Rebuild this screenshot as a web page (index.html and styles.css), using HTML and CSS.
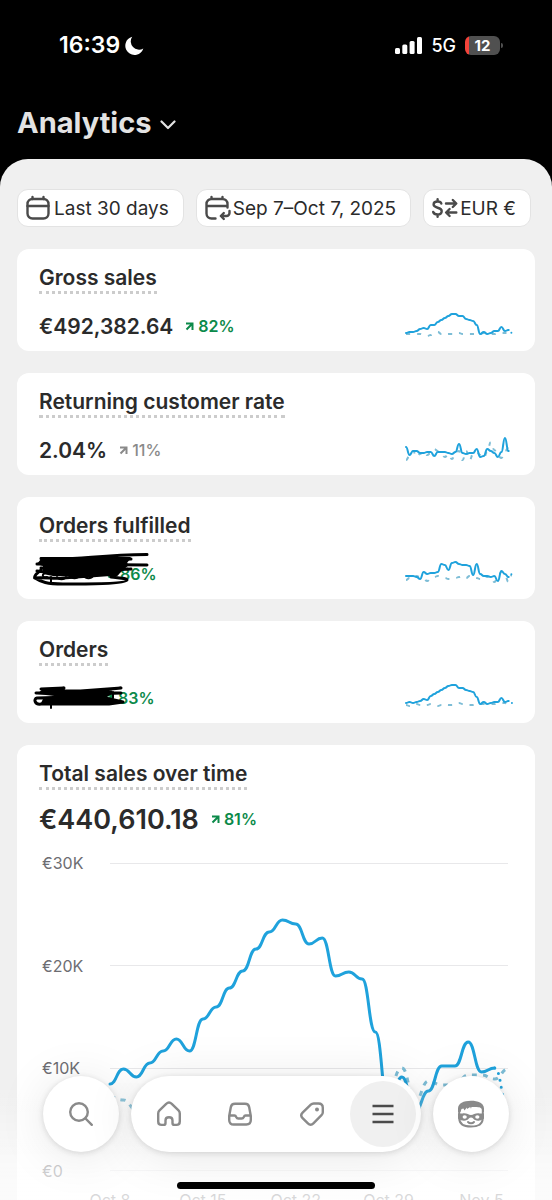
FILE: index.html
```html
<!DOCTYPE html>
<html lang="en">
<head>
    <meta charset="utf-8">
    <meta name="viewport" content="width=device-width, initial-scale=1">
    <title>Analytics</title>
    <link rel="stylesheet" href="styles.css">
</head>
<body>
    <div class="app">
        <div class="status-bar">
            <div class="status-left">
                <span class="time">16:39</span>
                <svg class="moon" viewBox="0 0 19 19"><path d="M7.2 0.8A9.2 9.2 0 1 0 18.3 12.4A8.2 8.2 0 0 1 7.2 0.8Z" fill="#fff"/></svg>
            </div>
            <div class="status-right">
                <svg class="signal" viewBox="0 0 27 17" fill="#fff">
                    <rect x="0" y="11" width="5" height="6" rx="1.5"/>
                    <rect x="7.3" y="7.5" width="5" height="9.5" rx="1.5"/>
                    <rect x="14.6" y="4" width="5" height="13" rx="1.5"/>
                    <rect x="22" y="0" width="5" height="17" rx="1.5"/>
                </svg>
                <span class="network">5G</span>
                <span class="battery">12</span>
            </div>
        </div>

        <header class="header">
            <h1>Analytics</h1>
            <svg class="chevron" viewBox="0 0 16 10"><path d="M1.5 1.5L8 8L14.5 1.5" fill="none" stroke="#e3e3e3" stroke-width="2.2" stroke-linecap="round" stroke-linejoin="round"/></svg>
        </header>

        <main class="sheet">
            <div class="filters">
                <button class="chip" type="button">
                    <svg class="icon" viewBox="0 0 24 24">
                        <rect x="1.5" y="3" width="21" height="19.5" rx="5"/>
                        <path d="M1.5 10H22.5M6.5 1V3M17.5 1V3"/>
                    </svg>
                    Last 30 days
                </button>
                <button class="chip" type="button">
                    <svg class="icon" viewBox="0 0 24 24">
                        <path d="M10.5 22.5H6.5A5 5 0 0 1 1.5 17.5V8A5 5 0 0 1 6.5 3H17.5A5 5 0 0 1 22.5 8V11.5M1.5 10H22.5M6.5 1V3M17.5 1V3"/>
                        <path d="M24.5 15V17A3 3 0 0 1 21.5 20H16M18.8 17L15.8 20L18.8 23"/>
                    </svg>
                    Sep 7–Oct 7, 2025
                </button>
                <button class="chip" type="button">
                    <svg class="icon" viewBox="0 0 24 24">
                        <path d="M9.3 7.5C9 6.2 7.7 5.5 5.6 5.5C3.4 5.5 1.6 6.4 1.6 8.5C1.6 12.7 9.7 10.8 9.7 15C9.7 17.3 7.7 18.5 5.6 18.5C3.2 18.5 1.7 17.5 1.2 16M5.6 3.2V5.5M5.6 18.5V20.8"/>
                        <path d="M14 7.5H24M20.8 4L24.3 7.5L20.8 11M24.3 16.5H14.5M17.6 13L14.1 16.5L17.6 20"/>
                    </svg>
                    EUR €
                </button>
            </div>

            <section class="card">
                <h2>Gross sales</h2>
                <div class="metric">
                    <span class="value">€492,382.64</span>
                    <span class="trend up"><svg class="arrow" viewBox="0 0 9 9"><path d="M1 1.5H7.5V8M7 2L1.5 7.5"/></svg>82%</span>
                    <svg class="spark" id="spark-gross" viewBox="0 0 106 32"></svg>
                </div>
            </section>

            <section class="card">
                <h2>Returning customer rate</h2>
                <div class="metric">
                    <span class="value">2.04%</span>
                    <span class="trend flat"><svg class="arrow" viewBox="0 0 9 9"><path d="M1 1.5H7.5V8M7 2L1.5 7.5"/></svg>11%</span>
                    <svg class="spark" id="spark-returning" viewBox="0 0 106 32"></svg>
                </div>
            </section>

            <section class="card">
                <h2>Orders fulfilled</h2>
                <div class="metric">
                    <span class="value hidden-value"></span>
                    <span class="trend up"><svg class="arrow" viewBox="0 0 9 9"><path d="M1 1.5H7.5V8M7 2L1.5 7.5"/></svg>86%</span>
                    <svg class="scribble" viewBox="0 0 120 36">
                        <path d="M8 5.5H97M8 5.5C45 8 60 2 114 1.5M4 11L98 6M4 11L114 12M8 15L95 16M98 16L20 20L4 18M8 17C4 20 1 23 1.5 25C12 24 20 26 30 25L84 21M2 25C8 29 14 31 30 31C50 31 94 31 94 27C94 25 84 25 78 24"/>
                        <path class="fill" d="M8 6L97 6L94 10L96 12L90 17L84 23L64 23H20L10 21L10 13L4 11Z"/>
                        <path class="thin" d="M18 24V30M24 24A5 4 0 0 0 33 24M37 23A5 4 0 0 0 46 23M51 23A5 4 0 0 0 60 23M12 20C8 22 10 25 14 24"/>
                    </svg>
                    <svg class="spark" id="spark-fulfilled" viewBox="0 0 106 32"></svg>
                </div>
            </section>

            <section class="card">
                <h2>Orders</h2>
                <div class="metric">
                    <span class="value hidden-value short"></span>
                    <span class="trend up"><svg class="arrow" viewBox="0 0 9 9"><path d="M1 1.5H7.5V8M7 2L1.5 7.5"/></svg>83%</span>
                    <svg class="scribble" viewBox="0 0 120 36">
                        <path d="M8 12L31 11L10 14L58 14L88 11L34 15L3 16L88 16L30 18L78 15L70 19L4 21C0 22 2 28 8 27L76 27L90 25L68 20L10 21L85 25"/>
                        <path class="fill" d="M10 12L30 11L32 13L78 14L68 18L72 20L88 25L74 28L12 28L8 26L10 22L30 20L4 17Z"/>
                        <path class="thin" d="M18 27V31M72 20L80 15V21"/>
                    </svg>
                    <svg class="spark" id="spark-orders" viewBox="0 0 106 32"></svg>
                </div>
            </section>

            <section class="card total">
                <h2>Total sales over time</h2>
                <div class="metric">
                    <span class="value large">€440,610.18</span>
                    <span class="trend up"><svg class="arrow" viewBox="0 0 9 9"><path d="M1 1.5H7.5V8M7 2L1.5 7.5"/></svg>81%</span>
                </div>
                <div class="chart">
                    <div class="y-axis">
                        <span>€30K</span>
                        <span>€20K</span>
                        <span>€10K</span>
                        <span>€0</span>
                    </div>
                    <svg class="plot" id="plot" viewBox="0 0 398 308" preserveAspectRatio="none">
                        <path class="grid" d="M0 0.5H398M0 102.5H398M0 205.5H398M0 307.5H398"/>
                    </svg>
                    <div class="x-axis">
                        <span>Oct 8</span>
                        <span>Oct 15</span>
                        <span>Oct 22</span>
                        <span>Oct 29</span>
                        <span>Nov 5</span>
                    </div>
                </div>
            </section>
        </main>

        <div class="dock">
            <nav class="dock-row">
                <button class="round" type="button" aria-label="Search">
                    <svg class="nav-icon" viewBox="0 0 24 24"><circle cx="10" cy="10" r="8.8"/><path d="M16.5 16.5L22.8 22.8"/></svg>
                </button>
                <div class="pill">
                    <a href="#home" class="tab" aria-label="Home">
                        <svg class="nav-icon" viewBox="0 0 24 24"><path d="M9.2 1.8L2.5 8.3C1.6 9.2 1.2 10.3 1.2 11.5V19.5C1.2 21.5 2.6 22.9 4.6 22.9H6.5C7.7 22.9 8.5 22.1 8.5 20.9V18.5C8.5 16.5 10 15.3 12 15.3S15.5 16.5 15.5 18.5V20.9C15.5 22.1 16.3 22.9 17.5 22.9H19.4C21.4 22.9 22.8 21.5 22.8 19.5V11.5C22.8 10.3 22.4 9.2 21.5 8.3L14.8 1.8C13.2 0.4 10.8 0.4 9.2 1.8Z"/></svg>
                    </a>
                    <a href="#orders" class="tab" aria-label="Orders">
                        <svg class="nav-icon" viewBox="0 0 24 24"><path d="M7 1.8H17C19.3 1.8 20.8 3 21.2 5.2L22.8 14V18C22.8 20.8 21.2 22.5 18.3 22.5H5.7C2.8 22.5 1.2 20.8 1.2 18V14L2.8 5.2C3.2 3 4.7 1.8 7 1.8ZM1.5 13.5H6.5C7.5 13.5 7.8 14 8.2 15C8.7 16.1 9.3 16.5 10.3 16.5H13.7C14.7 16.5 15.3 16.1 15.8 15C16.2 14 16.5 13.5 17.5 13.5H22.5"/></svg>
                    </a>
                    <a href="#products" class="tab" aria-label="Products">
                        <svg class="nav-icon" viewBox="0 0 24 24"><path d="M13.8 1.5H18.5C21.2 1.5 22.8 3.1 22.8 5.8V10.2C22.8 11.4 22.3 12.4 21.5 13.2L13.4 21.4C11.7 23.1 9.6 23.1 7.9 21.4L2.6 16.1C0.9 14.4 0.9 12.3 2.6 10.6L10.8 2.7C11.6 1.9 12.6 1.5 13.8 1.5Z"/><circle class="dot" cx="17" cy="7.5" r="2"/></svg>
                    </a>
                    <a href="#menu" class="tab active" aria-label="Menu">
                        <svg class="nav-icon" viewBox="0 0 24 24"><path d="M1.5 4H22.5M1.5 12H22.5M1.5 20H22.5"/></svg>
                    </a>
                </div>
                <button class="round" type="button" aria-label="Assistant">
                    <svg class="face" viewBox="0 0 28 28">
                        <path d="M2.2 9V18C2.2 24 6.5 26.6 14 26.6S25.8 24 25.8 18V9" fill="none" stroke="#8a8a8a" stroke-width="2"/>
                        <path d="M1 12V8.5C1 3.500 6.500 0.800 14 0.800S27 3.500 27 8.500V12H25V9.500C24 7.500 22 7 19.500 7H14.500L14 8.800L13.200 7L10 9L9.800 7.500L7.500 10.500L6.500 8.500L4.500 9L3.500 12Z" fill="#8a8a8a"/>
                        <path d="M1 13.500H5.500C9 12.600 11.500 15 14 15S19 12.600 22.500 13.500H27V18.500L24 20.300C20 21.300 17.500 20.300 16.200 18.500C15.200 17.300 12.800 17.300 11.800 18.500C10.500 20.300 8 21.300 4 20.300L1 18.500Z" fill="#8a8a8a"/>
                        <ellipse cx="7.700" cy="17" rx="2.100" ry="1.700" fill="#fff"/>
                        <ellipse cx="20.300" cy="17" rx="2.100" ry="1.700" fill="#fff"/>
                        <path d="M11 22C12.500 23.600 15.500 23.600 17 22" fill="none" stroke="#8a8a8a" stroke-width="2" stroke-linecap="round"/>
                    </svg>
                </button>
            </nav>
            <div class="home-indicator"></div>
        </div>
    </div>

    <script src="script.js"></script>
</body>
</html>
```
FILE: styles.css
```css
* {
    box-sizing: border-box;
}
body {
    margin: 0;
    background: #000;
    font-family: Inter, "Liberation Sans", sans-serif;
    color: #2b2b2b;
}
h1, h2 {
    margin: 0;
}
button {
    font-family: inherit;
    color: inherit;
}
.app {
    display: flex;
    flex-direction: column;
    height: 100vh;
    overflow: hidden;
}

/* status bar */
.status-bar {
    display: flex;
    justify-content: space-between;
    align-items: center;
    padding: 30px 52px 0 59px;
    height: 60px;
    flex-shrink: 0;
    color: #fff;
}
.status-left, .status-right {
    display: flex;
    align-items: center;
}
.status-left {
    gap: 5px;
}
.status-right {
    gap: 9px;
}
.time {
    font-size: 23px;
    font-weight: 600;
}
.moon {
    width: 19px;
    height: 19px;
}
.signal {
    width: 27px;
    height: 17px;
}
.network {
    font-size: 18px;
    font-weight: 500;
}
.battery {
    position: relative;
    width: 35px;
    height: 19px;
    border-radius: 6px;
    background: linear-gradient(to right, #f4433a 4px, #505050 4px);
    font-size: 15px;
    font-weight: 700;
    line-height: 19px;
    text-align: center;
}
.battery::after {
    content: "";
    position: absolute;
    right: -3px;
    top: 7px;
    width: 2px;
    height: 5px;
    border-radius: 0 2px 2px 0;
    background: #505050;
}

.header {
    display: flex;
    align-items: center;
    gap: 9px;
    height: 99px;
    padding: 26px 17px 0;
    flex-shrink: 0;
    color: #e3e3e3;
}
h1 {
    font-size: 29px;
    font-weight: 700;
}
.chevron {
    width: 16px;
    height: 10px;
    margin-top: 4px;
}

/* sheet */
.sheet {
    display: flex;
    flex-direction: column;
    gap: 22px;
    flex: 1;
    min-height: 0;
    padding: 30px 17px 0;
    border-radius: 28px 28px 0 0;
    background: #f0f0f0;
    overflow: hidden;
}
.filters {
    display: flex;
    gap: 12px;
    flex-shrink: 0;
}
.chip {
    display: flex;
    align-items: center;
    gap: 4px;
    height: 38px;
    padding: 0 14px 0 8px;
    border: 1px solid #e3e3e3;
    border-radius: 11px;
    background: #fff;
    font-size: 19px;
    white-space: nowrap;
}
.icon {
    width: 24px;
    height: 24px;
    overflow: visible;
    fill: none;
    stroke: #4a4a4a;
    stroke-width: 2.4;
    stroke-linecap: round;
    stroke-linejoin: round;
}

/* cards */
.card {
    flex-shrink: 0;
    padding: 16px 23px 9px 22px;
    border-radius: 12px;
    background: #fff;
}
h2 {
    width: fit-content;
    border-bottom: 3px dotted #ccc;
    font-size: 21px;
    font-weight: 600;
    line-height: 26px;
}
.metric {
    position: relative;
    display: flex;
    align-items: center;
    height: 32px;
    margin-top: 16px;
}
.value {
    font-size: 21px;
    font-weight: 600;
}
.value.large {
    font-size: 27px;
}
.hidden-value {
    width: 56px;
}
.hidden-value.short {
    width: 54px;
}
.trend {
    display: flex;
    align-items: center;
    gap: 4px;
    margin-left: 12px;
    font-size: 16px;
    font-weight: 600;
}
.trend.up {
    color: #0c8a4a;
}
.trend.flat {
    color: #8a8a8a;
    font-weight: 500;
}
.arrow {
    width: 9px;
    height: 9px;
    fill: none;
    stroke: currentColor;
    stroke-width: 2;
}
.spark {
    width: 106px;
    height: 32px;
    margin-left: auto;
    overflow: visible;
}
.scribble {
    position: absolute;
    left: -6px;
    top: -5px;
    width: 120px;
    height: 36px;
    overflow: visible;
    fill: none;
    stroke: #000;
    stroke-width: 3;
    stroke-linecap: round;
    stroke-linejoin: round;
}
.scribble .fill {
    fill: #000;
    stroke: none;
}
.scribble .thin {
    stroke-width: 2;
}
.line {
    fill: none;
    stroke: #1fa2dc;
    stroke-width: 2;
    stroke-linecap: round;
}
.compare {
    fill: none;
    stroke: #7dbdd6;
    stroke-width: 2;
    stroke-dasharray: 4 7;
}
.estimate {
    fill: none;
    stroke: #1fa2dc;
    stroke-width: 2;
    stroke-linecap: round;
    stroke-dasharray: 0 4;
}

/* chart */
.total .metric {
    height: 34px;
    margin-top: 12px;
}
.chart {
    display: grid;
    grid-template-columns: 71px 1fr;
    margin-top: 27px;
    padding-right: 4px;
    font-size: 16px;
    color: #6d6d72;
}
.y-axis {
    display: flex;
    flex-direction: column;
    justify-content: space-between;
    margin: -10px 0;
    padding-left: 3px;
    line-height: 20px;
}
.plot {
    width: 100%;
    height: 308px;
    overflow: visible;
}
.plot .line, .plot .compare, .plot .estimate {
    stroke-width: 3;
}
.plot .compare {
    stroke-dasharray: 5 6;
}
.plot .estimate {
    stroke-dasharray: 0 7;
}
.grid {
    fill: none;
    stroke: #e8e8ea;
    stroke-width: 1;
}
.x-axis {
    grid-column: 2;
    display: flex;
    margin-top: 19px;
    margin-left: -11.67%;
}
.x-axis span {
    flex: 0 0 20.9%;
    text-align: center;
}

/* bottom navigation */
.dock {
    position: fixed;
    left: 0;
    right: 0;
    bottom: 0;
    padding: 44px 43px 11px;
    background: linear-gradient(to bottom, rgba(255, 255, 255, 0) 30%, rgba(255, 255, 255, 0.65) 80%, rgba(255, 255, 255, 0.75));
}
.dock-row {
    display: flex;
    gap: 12px;
}
.round, .pill {
    height: 76px;
    border: none;
    border-radius: 38px;
    background: #fff;
    box-shadow: 0 1px 6px rgba(0, 0, 0, 0.14), 0 4px 50px rgba(0, 0, 0, 0.1);
}
.round {
    display: flex;
    align-items: center;
    justify-content: center;
    width: 76px;
    padding: 0;
}
.pill {
    display: flex;
    flex: 1;
    align-items: center;
    justify-content: space-between;
    padding: 0 5px;
}
.tab {
    display: flex;
    align-items: center;
    justify-content: center;
    width: 66px;
    height: 66px;
    border-radius: 50%;
}
.tab.active {
    background: #f0f0f0;
}
.nav-icon {
    width: 24px;
    height: 24px;
    overflow: visible;
    fill: none;
    stroke: #8a8a8a;
    stroke-width: 2.4;
    stroke-linecap: round;
    stroke-linejoin: round;
}
.nav-icon .dot {
    fill: #8a8a8a;
    stroke: none;
}
.active .nav-icon {
    stroke: #4a4a4a;
    stroke-linecap: butt;
}
.face {
    width: 28px;
    height: 28px;
}
.home-indicator {
    width: 198px;
    height: 7px;
    margin: 30px auto 0;
    border-radius: 4px;
    background: #000;
}
```
FILE: script.js
```js
const svgNS = 'http://www.w3.org/2000/svg';

// smooth path that flattens out at every data point
function curve(points) {
    let d = `M${points[0][0]} ${points[0][1]}`;
    for (let i = 1; i < points.length; i++) {
        const [x0, y0] = points[i - 1];
        const [x1, y1] = points[i];
        const mid = (x0 + x1) / 2;
        d += `C${mid} ${y0} ${mid} ${y1} ${x1} ${y1}`;
    }
    return d;
}

function addPath(svg, points, className) {
    const path = document.createElementNS(svgNS, 'path');
    path.setAttribute('d', curve(points));
    path.setAttribute('class', className);
    svg.appendChild(path);
}

function drawChart(id, width, current, previous) {
    const svg = document.getElementById(id);
    const step = width / 30;
    const toPoints = list => list.map((y, i) => [i * step, y]);
    const points = toPoints(current);
    addPath(svg, toPoints(previous), 'compare');
    addPath(svg, points.slice(0, -1), 'line');
    // the last day is not finished yet
    addPath(svg, points.slice(-2), 'estimate');
}

drawChart('spark-gross', 106,
    [23, 22, 22, 21, 19, 18, 19, 15, 15, 12, 10, 8, 6, 4, 4, 6, 6, 9, 10, 11, 15, 24, 22, 24, 23, 21, 21, 17, 21, 20, 23],
    [24, 24, 24, 24, 24, 25, 26, 25, 23, 22, 24, 25, 24, 24, 24, 23, 24, 24, 24, 24, 24, 24, 23, 24, 24, 24, 23, 23, 23, 23, 22]);

drawChart('spark-returning', 106,
    [13, 21, 17, 17, 19, 19, 18, 18, 22, 18, 18, 18, 19, 20, 18, 10, 19, 20, 19, 19, 15, 23, 22, 15, 17, 19, 23, 18, 4, 17, 18],
    [26, 22, 17, 23, 20, 17, 21, 19, 15, 17, 20, 23, 20, 25, 19, 17, 26, 17, 26, 20, 18, 21, 24, 18, 8, 16, 22, 24, 17, 14, 18]);

drawChart('spark-fulfilled', 106,
    [18, 18, 18, 19, 21, 14, 16, 15, 15, 14, 6, 7, 12, 5, 4, 6, 7, 7, 8, 17, 6, 16, 18, 18, 19, 18, 23, 13, 16, 19, 16],
    [22, 20, 21, 18, 19, 21, 23, 20, 19, 18, 19, 20, 21, 21, 20, 19, 18, 20, 18, 18, 20, 21, 18, 19, 18, 24, 20, 14, 17, 24, 17]);

drawChart('spark-orders', 106,
    [21, 20, 21, 20, 19, 17, 18, 14, 12, 10, 8, 6, 4, 3, 3, 6, 6, 8, 9, 10, 15, 22, 20, 22, 21, 20, 20, 16, 20, 19, 21],
    [23, 24, 22, 22, 23, 24, 23, 22, 23, 24, 23, 22, 23, 23, 22, 21, 22, 22, 23, 23, 22, 22, 22, 22, 22, 22, 21, 21, 21, 22, 20]);

drawChart('plot', 398,
    [221, 206, 214, 200, 188, 176, 188, 156, 144, 125, 108, 86, 69, 57, 61, 81, 75, 113, 109, 116, 169, 245, 214, 248, 228, 203, 203, 179, 209, 205, 245],
    [234, 237, 247, 243, 250, 248, 254, 250, 243, 248, 252, 246, 250, 245, 252, 250, 246, 250, 255, 250, 245, 225, 205, 238, 218, 222, 222, 212, 212, 216, 206]);
```
